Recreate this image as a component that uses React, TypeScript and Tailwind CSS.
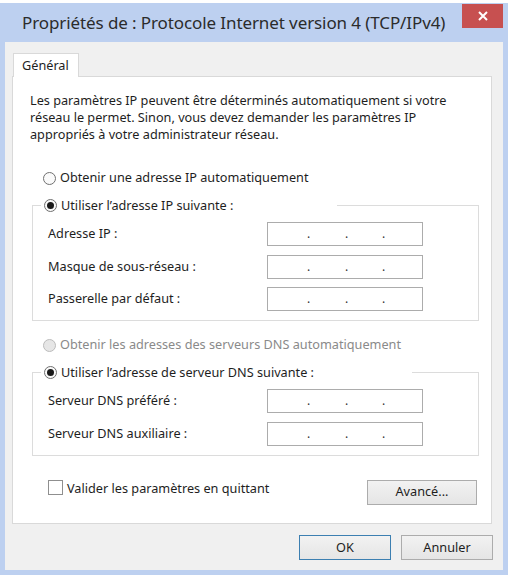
import React from "react";

function Radio({ checked, disabled }: { checked?: boolean; disabled?: boolean }) {
  return (
    <span
      className={
        "inline-flex items-center justify-center w-[13px] h-[13px] rounded-full border " +
        (disabled ? "border-[#bcbcbc] bg-[#e6e6e6]" : "border-[#707070] bg-[#fafafa]")
      }
    >
      {checked ? <span className="w-[7px] h-[7px] rounded-full bg-[#1a1a1a]" /> : null}
    </span>
  );
}

function IpInput() {
  return (
    <div className="relative w-[156px] h-[24px] border border-[#acacac] bg-white">
      <span className="absolute left-[39px] top-[4px] text-[12px] leading-[14px] text-[#333]">.</span>
      <span className="absolute left-[77px] top-[4px] text-[12px] leading-[14px] text-[#333]">.</span>
      <span className="absolute left-[114px] top-[4px] text-[12px] leading-[14px] text-[#333]">.</span>
    </div>
  );
}

function FieldRow({ label }: { label: string }) {
  return (
    <div className="flex items-center h-[24px]">
      <span className="w-[234px] pl-[15px] text-[12.7px] text-[#1e1e1e]">{label}</span>
      <IpInput />
    </div>
  );
}

function Group({
  legend,
  legendWidth,
  children,
}: {
  legend: string;
  legendWidth: number;
  children: React.ReactNode;
}) {
  return (
    <div className="relative ml-[19px] w-[447px] border border-[#dcdcdc]">
      <div
        className="absolute left-[8px] -top-[9px] h-[16px] flex items-center gap-[4px] bg-white pl-[3px]"
        style={{ width: legendWidth }}
      >
        <Radio checked />
        <span className="text-[12.7px] text-[#1e1e1e] leading-[16px]">{legend}</span>
      </div>
      {children}
    </div>
  );
}

function Btn({ children, primary, w }: { children: React.ReactNode; primary?: boolean; w: string }) {
  return (
    <div
      className={
        "h-[25px] flex items-center justify-center text-[12.7px] text-[#1e1e1e] bg-gradient-to-b from-[#f2f2f2] to-[#e5e5e5] border " +
        (primary ? "border-[#3c7fb1] " : "border-[#acacac] ") +
        w
      }
    >
      {children}
    </div>
  );
}

export default function App() {
  return (
    <div className="w-[508px] h-[587px] bg-white font-['Noto_Sans',sans-serif] overflow-hidden">
      <div className="mt-[3px] w-[508px] h-[572px] bg-[#bdd0f0] flex flex-col px-[5px] pb-[5px]">
        {/* Title bar */}
        <div className="h-[39px] relative flex items-center">
          <span className="pl-[17px] pt-[1px] text-[17px] text-[#2b2b2b] tracking-[-0.1px]">
            Propriétés de : Protocole Internet version 4 (TCP/IPv4)
          </span>
          <div className="absolute right-0 top-[1px] w-[41px] h-[24px] bg-[#c75050] flex items-center justify-center">
            <svg width="10" height="10" viewBox="0 0 10 10">
              <path d="M1 1 L9 9 M9 1 L1 9" stroke="white" strokeWidth="2" />
            </svg>
          </div>
        </div>
        {/* Client */}
        <div className="flex-1 bg-[#f0f0f0] flex flex-col">
          <div className="pl-[8px] pt-[11px] flex">
            <div className="w-[66px] h-[24px] bg-white border border-[#d9d9d9] border-b-0 text-[12.7px] text-[#1e1e1e] pl-[8px] pt-[2px] relative z-10">
              Général
            </div>
          </div>
          <div className="ml-[7px] -mt-[1px] w-[480px] h-[448px] bg-white border border-[#d9d9d9] flex flex-col">
            <div className="pl-[17px] pt-[15px] pr-[10px] text-[12.7px] text-[#1e1e1e] flex flex-col">
              <div className="leading-[17px]">Les paramètres IP peuvent être déterminés automatiquement si votre</div>
              <div className="leading-[17px]">réseau le permet. Sinon, vous devez demander les paramètres IP</div>
              <div className="leading-[17px]">appropriés à votre administrateur réseau.</div>
            </div>
            <div className="mt-[27px] ml-[30px] flex items-center gap-[4px] h-[16px]">
              <Radio />
              <span className="text-[12.7px] text-[#1e1e1e]">Obtenir une adresse IP automatiquement</span>
            </div>
            <div className="mt-[19px]">
              <Group legend="Utiliser l’adresse IP suivante :" legendWidth={296}>
                <div className="pt-[16px] pb-[9px] flex flex-col gap-[8.5px]">
                  <FieldRow label="Adresse IP :" />
                  <FieldRow label="Masque de sous-réseau :" />
                  <FieldRow label="Passerelle par défaut :" />
                </div>
              </Group>
            </div>
            <div className="mt-[16px] ml-[30px] flex items-center gap-[4px] h-[16px]">
              <Radio disabled />
              <span className="text-[12.7px] text-[#8a8a8a]">Obtenir les adresses des serveurs DNS automatiquement</span>
            </div>
            <div className="mt-[19px]">
              <Group legend="Utiliser l’adresse de serveur DNS suivante :" legendWidth={371}>
                <div className="pt-[16px] pb-[9px] flex flex-col gap-[8.5px]">
                  <FieldRow label="Serveur DNS préféré :" />
                  <FieldRow label="Serveur DNS auxiliaire :" />
                </div>
              </Group>
            </div>
            <div className="mt-[24px] flex items-start">
              <div className="ml-[35px] w-[15px] h-[15px] border border-[#8f8f8f] bg-white" />
              <span className="ml-[4px] -mt-[1px] text-[12.7px] text-[#1e1e1e] flex-1">Valider les paramètres en quittant</span>
              <div className="mr-[14px]">
                <Btn w="w-[110px]">Avancé...</Btn>
              </div>
            </div>
          </div>
          <div className="mt-[11px] flex justify-end gap-[10px] pr-[10px]">
            <Btn primary w="w-[92px]">OK</Btn>
            <Btn w="w-[92px]">Annuler</Btn>
          </div>
        </div>
      </div>
    </div>
  );
}
